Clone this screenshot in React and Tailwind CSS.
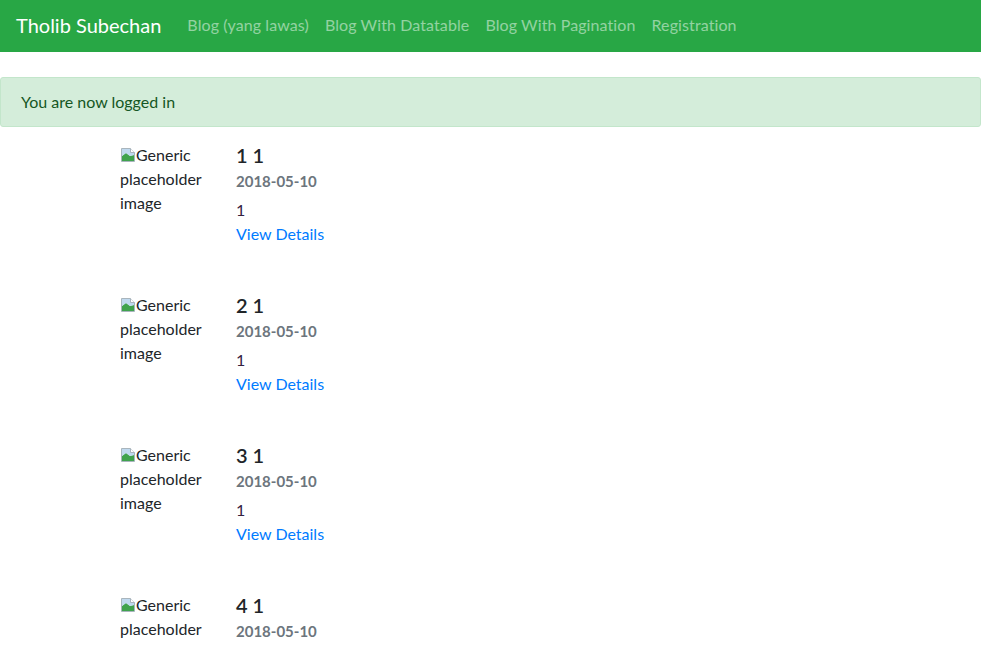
import React from "react";

const BrokenImg = () => (
  <svg width="16" height="16" viewBox="0 0 16 16" className="inline-block align-[-2px]">
    <path d="M1.5 1.5 H10.5 L14.5 5.5 V14.5 H1.5 Z" fill="#dfe8ee" stroke="#a9b5bd" strokeWidth="1" />
    <path d="M2 14 L2 9 L6 6 L10 9 L14 8 L14 14 Z" fill="#3fa34d" />
    <path d="M2 9 L6 6 L10 9 L14 8 L14 6 L10.5 2 L2 2 Z" fill="#bfd9ef" />
    <path d="M10.5 1.5 V5.5 H14.5" fill="#fff" stroke="#a9b5bd" strokeWidth="1" />
  </svg>
);

const items = [1, 2, 3, 4];

export default function App() {
  return (
    <div className="h-[645px] overflow-hidden bg-white text-[#212529] text-base" style={{ fontFamily: "Lato, 'Open Sans', sans-serif" }}>
      <nav className="bg-[#28a745] h-[52px] flex items-center px-4">
        <a className="text-white text-[20px] mr-[18px] leading-none mb-[2px]">Tholib Subechan</a>
        <div className="flex items-center mb-[2px]">
          {["Blog (yang lawas)", "Blog With Datatable", "Blog With Pagination", "Registration"].map((t) => (
            <a key={t} className="px-2 text-[16px] tracking-[0.1px] text-white/50">{t}</a>
          ))}
        </div>
      </nav>
      <div className="mt-[25px] h-[50px] bg-[#d4edda] border border-[#c3e6cb] rounded-[3px] text-[#155724] flex items-center px-5 text-[16px]">
        You are now logged in
      </div>
      <div className="pl-[120px] pt-4">
        {items.map((n) => (
          <div key={n} className="flex h-[150px]">
            <div className="w-[100px] mr-4 leading-6 text-[16px] text-[#212529]">
              <BrokenImg />Generic placeholder image
            </div>
            <div>
              <div className="text-[20px] font-semibold leading-6 text-[#212529]">{n} 1</div>
              <div className="text-[15px] font-bold text-[#6c757d] leading-6 mt-[2px]">2018-05-10</div>
              <div className="text-[16px] leading-6 mt-[5px] text-[#34213f]">1</div>
              <a className="text-[16px] leading-6 text-[#007bff] block">View Details</a>
            </div>
          </div>
        ))}
      </div>
    </div>
  );
}
